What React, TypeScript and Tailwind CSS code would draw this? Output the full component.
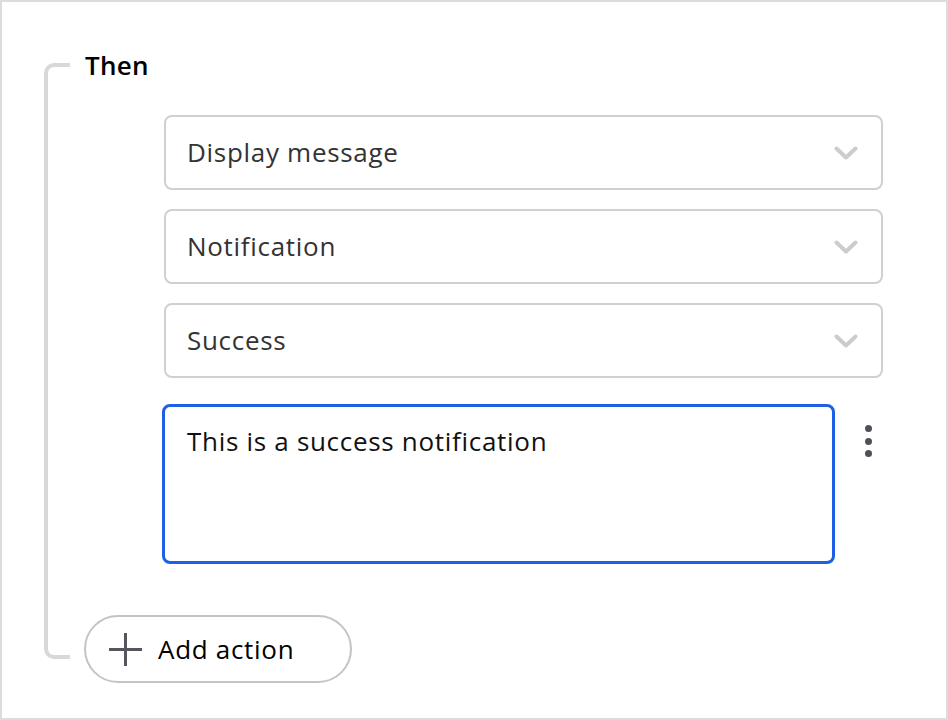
const options = ['Display message', 'Notification', 'Success'];

function Chevron() {
  return (
    <svg width="24" height="16" viewBox="0 0 24 16" className="mt-[3px] shrink-0">
      <path
        d="M2.5 2.5 L12 11.5 L21.5 2.5"
        stroke="#cccccc"
        strokeWidth="4"
        strokeLinecap="round"
        strokeLinejoin="round"
        fill="none"
      />
    </svg>
  );
}

function SelectBox({ label }: { label: string }) {
  return (
    <div className="flex h-[75px] w-[719px] items-center justify-between rounded-lg border-2 border-[#d0d0d0] bg-white pl-[21px] pr-[23px]">
      <span className="text-[26px] tracking-[0.7px] text-[#333333]">{label}</span>
      <Chevron />
    </div>
  );
}

export default function App() {
  return (
    <div
      className="h-[720px] w-[948px] border-2 border-[#dcdcdc] bg-white"
      style={{ fontFamily: '"Open Sans", "Noto Sans", sans-serif' }}
    >
      <div className="flex pl-[42px] pt-[48px]">
        <div className="mb-[24px] mt-[13px] w-[26px] rounded-l-[10px] border-y-4 border-l-4 border-[#d8d8d8]" />

        <div className="ml-[14px] flex flex-col">
          <h2 className="h-[30px] pl-[1px] text-[26px] font-semibold leading-[30px] tracking-[0.3px] text-black">
            Then
          </h2>

          <div className="ml-[80px] mt-[35px] flex flex-col gap-[19px]">
            {options.map((o) => (
              <SelectBox key={o} label={o} />
            ))}

            <div className="ml-[-2px] mt-[7px] flex items-start">
              <div className="h-[160px] w-[673px] rounded-lg border-[3px] border-[#1f5fe6] px-[22px] pt-[18px] text-[26px] leading-[32px] tracking-[0.7px] text-[#111111]">
                This is a success notification
              </div>
              <div className="ml-[30px] mt-[21px] flex flex-col items-center gap-[5.5px]">
                <span className="h-[7px] w-[7px] rounded-full bg-[#505058]" />
                <span className="h-[7px] w-[7px] rounded-full bg-[#505058]" />
                <span className="h-[7px] w-[7px] rounded-full bg-[#505058]" />
              </div>
            </div>
          </div>

          <button
            type="button"
            className="mt-[51px] flex h-[68px] w-[268px] items-center rounded-full border-2 border-[#c4c4c4] bg-white pl-[23px]"
          >
            <svg width="33" height="33" viewBox="0 0 33 33" className="shrink-0">
              <path d="M16.5 0v33M0 16.5h33" stroke="#55555d" strokeWidth="3" fill="none" />
            </svg>
            <span className="ml-[16px] text-[26px] tracking-[0.7px] text-black">Add action</span>
          </button>
        </div>
      </div>
    </div>
  );
}
